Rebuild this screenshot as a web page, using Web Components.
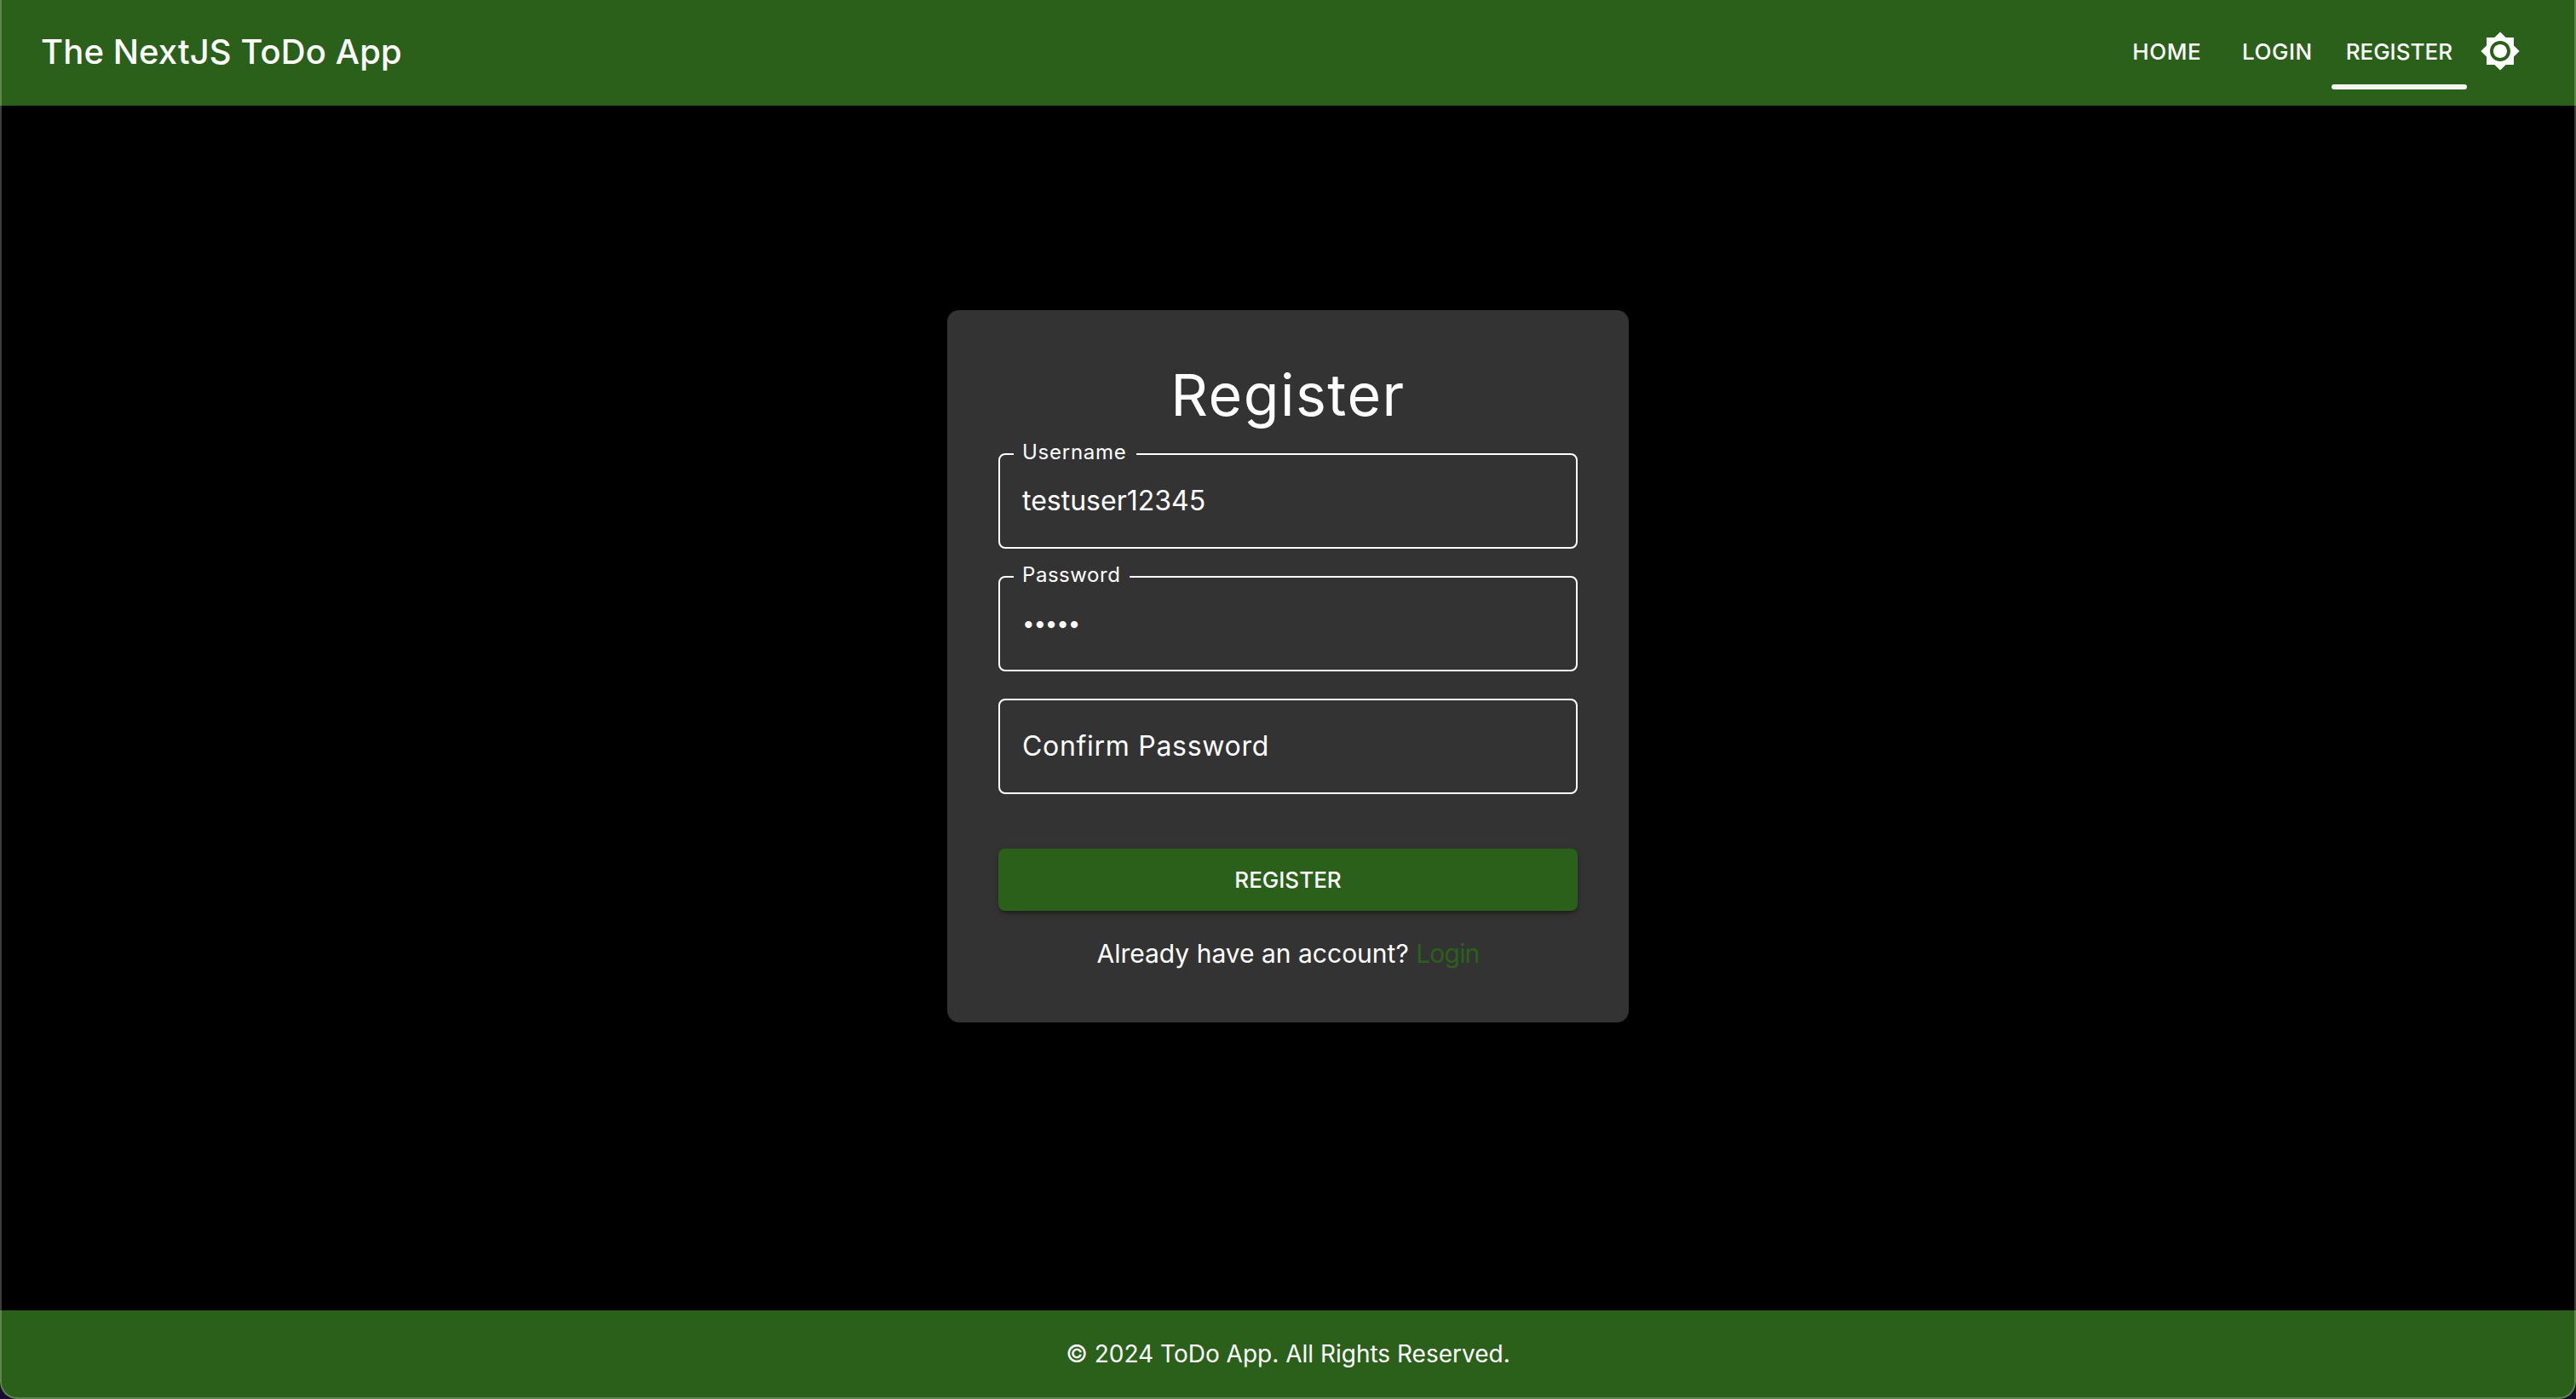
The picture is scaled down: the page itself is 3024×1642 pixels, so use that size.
<!DOCTYPE html>
<html lang="en">
<head>
<meta charset="utf-8">
<title>The NextJS ToDo App</title>
<style>
   html, body { margin: 0; height: 100%; background: #1a0b30; }
   body { font-family: Inter, "Liberation Sans", sans-serif; color: #fff; }
</style>
</head>
<body>
<app-shell>
   <app-header slot="header" brand="The NextJS ToDo App">
      <nav-link>HOME</nav-link>
      <nav-link>LOGIN</nav-link>
      <nav-link active>REGISTER</nav-link>
      <theme-toggle></theme-toggle>
   </app-header>
   <register-card heading="Register">
      <outlined-field label="Username" style="--label-spacing: .75px">testuser12345</outlined-field>
      <outlined-field label="Password"><span class="dots">•••••</span></outlined-field>
      <outlined-field style="letter-spacing: .7px">Confirm Password</outlined-field>
      <primary-button slot="actions">REGISTER</primary-button>
      <span slot="note">Already have an account?</span>
      <a slot="link" href="#">Login</a>
   </register-card>
   <app-footer slot="footer">© 2024 ToDo App. All Rights Reserved.</app-footer>
</app-shell>

<script>
"use strict";
/* [ helper ]
=================================== */
const define = ( tag, css, html, setup ) => {
   customElements.define( tag, class extends HTMLElement {
      constructor() {
         super();
         this.attachShadow( { mode: "open" } ).innerHTML = `<style>${ css }</style>${ html }`;
         if( setup ) setup( this );
      }
   } );
};

/* [ page frame ]
=================================== */
define( "app-shell", `
   :host {
      display: flex;
      flex-direction: column;
      position: relative;
      height: 1642px;
      overflow: hidden;
      background: #000;
      border-radius: 0 0 20px 20px;
   }
   main {
      flex: 1;
      display: flex;
      justify-content: center;
      align-items: flex-start;
      padding-top: 240px;
   }
   /* the window's thin light edge, lies over everything */
   .edge {
      position: absolute;
      inset: 0;
      border: 2px solid rgba( 255, 255, 255, .24 );
      border-top: 0;
      border-radius: 0 0 20px 20px;
      pointer-events: none;
   }
`, `
   <slot name="header"></slot>
   <main><slot></slot></main>
   <slot name="footer"></slot>
   <div class="edge"></div>
` );

define( "app-header", `
   :host {
      display: flex;
      align-items: center;
      height: 124px;
      padding: 0 65px 4px 48px;
      background: #2b601b;
      box-sizing: border-box;
   }
   h1 {
      flex: 1;
      margin: 0;
      font-size: 40px;
      font-weight: 500;
      letter-spacing: .1px;
      color: #fff;
   }
   nav {
      display: flex;
      align-items: center;
      height: 100%;
      gap: 15px;
   }
`, `
   <h1></h1>
   <nav><slot></slot></nav>
`, el => {
   el.shadowRoot.querySelector( "h1" ).textContent = el.getAttribute( "brand" );
} );

define( "nav-link", `
   :host {
      display: flex;
      align-items: center;
      position: relative;
      height: 100%;
      padding: 0 17px;
      font-size: 26px;
      font-weight: 500;
      color: #fff;
   }
   :host( :not( [active] ) ) {
      letter-spacing: .5px;
      margin-right: -1px;
   }
   :host( [active] ) {
      margin-left: -9px;
   }
   :host( [active] )::after {
      content: "";
      position: absolute;
      left: 0;
      right: 0;
      top: 99px;
      height: 6px;
      border-radius: 3px;
      background: #f5f5f5;
   }
`, `<slot></slot>` );

define( "theme-toggle", `
   :host {
      display: flex;
      align-items: center;
   }
   svg { display: block; width: 48px; height: 48px; fill: #fff; }
`, `
   <svg viewBox="0 0 24 24"><path d="M20 8.69V4h-4.69L12 .69 8.69 4H4v4.69L.69 12 4 15.31V20h4.69L12 23.31 15.31 20H20v-4.69L23.31 12 20 8.69zM12 18c-3.31 0-6-2.69-6-6s2.69-6 6-6 6 2.69 6 6-2.69 6-6 6zm0-10c-2.21 0-4 1.79-4 4s1.79 4 4 4 4-1.79 4-4-1.79-4-4-4z"/></svg>
` );

define( "app-footer", `
   :host {
      display: flex;
      align-items: center;
      justify-content: center;
      height: 104px;
      padding-bottom: 2px;
      box-sizing: border-box;
      background: #2b601b;
      font-size: 28px;
      color: #fff;
   }
`, `<slot></slot>` );

/* [ form ]
=================================== */
define( "register-card", `
   :host {
      display: block;
      width: 800px;
      box-sizing: border-box;
      padding: 60px 60px 57px;
      background: #333;
      border-radius: 14px;
   }
   h2 {
      margin: 0 0 30px;
      font-size: 68px;
      line-height: 78px;
      font-weight: 400;
      letter-spacing: 1.5px;
      text-align: center;
      color: #fff;
   }
   .fields {
      display: flex;
      flex-direction: column;
      gap: 32px;
   }
   .actions {
      margin-top: 64px;
   }
   p {
      margin: 26px 0 0;
      font-size: 30px;
      line-height: 48px;
      text-align: center;
      color: #fff;
   }
   ::slotted( a ) {
      color: #2b601b;
      letter-spacing: -.8px;
      text-decoration: none;
   }
`, `
   <h2></h2>
   <div class="fields"><slot></slot></div>
   <div class="actions"><slot name="actions"></slot></div>
   <p><slot name="note"></slot> <slot name="link"></slot></p>
`, el => {
   el.shadowRoot.querySelector( "h2" ).textContent = el.getAttribute( "heading" );
} );

define( "outlined-field", `
   :host {
      display: flex;
      align-items: center;
      position: relative;
      height: 112px;
      box-sizing: border-box;
      padding: 0 26px 2px;
      border: 2px solid #fff;
      border-radius: 8px;
      font-size: 32px;
      color: #fff;
   }
   .floating {
      position: absolute;
      left: 16px;
      top: -18px;
      padding: 0 11px 0 10px;
      background: #333;
      font-size: 24px;
      line-height: 30px;
      letter-spacing: var( --label-spacing, .55px );
   }
   .floating:empty { display: none; }
   ::slotted( .dots ) {
      font-size: 26px;
      letter-spacing: -1.2px;
   }
`, `
   <span class="floating"></span>
   <slot></slot>
`, el => {
   el.shadowRoot.querySelector( ".floating" ).textContent = el.getAttribute( "label" ) || "";
} );

define( "primary-button", `
   :host {
      display: flex;
      align-items: center;
      justify-content: center;
      height: 73px;
      border-radius: 8px;
      background: #2b601b;
      box-shadow: 0 6px 2px -4px rgba( 0, 0, 0, .2 ), 0 4px 4px 0 rgba( 0, 0, 0, .14 ), 0 2px 10px 0 rgba( 0, 0, 0, .12 );
      font-size: 26px;
      font-weight: 500;
      color: #fff;
   }
`, `<slot></slot>` );
</script>
</body>
</html>
